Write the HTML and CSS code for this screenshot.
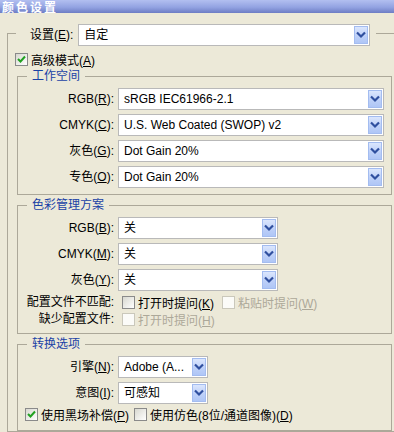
FILE: index.html
```html
<!DOCTYPE html>
<html lang="zh-CN">
<head>
    <meta charset="UTF-8">
    <meta name="viewport" content="width=device-width, initial-scale=1.0">
    <title>颜色设置</title>
    <link rel="stylesheet" href="styles.css">
</head>
<body>
    <!-- Title bar -->
    <div class="titlebar">颜色设置</div>

    <fieldset class="outer">
        <legend class="outer-legend">
            <span class="lbl-top">设置(<u>E</u>):</span>
            <div class="combo combo-top">
                <span class="combo-text">自定</span>
                <span class="drop"><svg width="12" height="16" viewBox="0 0 12 16"><polyline points="2,5.5 6,9.5 10,5.5" /></svg></span>
            </div>
        </legend>

        <div class="check check-adv">
            <span class="cb"><svg width="11" height="11" viewBox="0 0 11 11"><polyline points="2,5 4.5,7.5 9,2.5" /></svg></span>
            <span>高级模式(<u>A</u>)</span>
        </div>

        <!-- Working spaces -->
        <fieldset class="group group-work">
            <legend>工作空间</legend>
            <div class="form-grid">
                <span class="lbl">RGB(<u>R</u>):</span>
                <div class="combo combo-wide">
                    <span class="combo-text">sRGB IEC61966-2.1</span>
                    <span class="drop"><svg width="12" height="16" viewBox="0 0 12 16"><polyline points="2,5.5 6,9.5 10,5.5" /></svg></span>
                </div>
                <span class="lbl">CMYK(<u>C</u>):</span>
                <div class="combo combo-wide">
                    <span class="combo-text">U.S. Web Coated (SWOP) v2</span>
                    <span class="drop"><svg width="12" height="16" viewBox="0 0 12 16"><polyline points="2,5.5 6,9.5 10,5.5" /></svg></span>
                </div>
                <span class="lbl">灰色(<u>G</u>):</span>
                <div class="combo combo-wide">
                    <span class="combo-text">Dot Gain 20%</span>
                    <span class="drop"><svg width="12" height="16" viewBox="0 0 12 16"><polyline points="2,5.5 6,9.5 10,5.5" /></svg></span>
                </div>
                <span class="lbl">专色(<u>O</u>):</span>
                <div class="combo combo-wide">
                    <span class="combo-text">Dot Gain 20%</span>
                    <span class="drop"><svg width="12" height="16" viewBox="0 0 12 16"><polyline points="2,5.5 6,9.5 10,5.5" /></svg></span>
                </div>
            </div>
        </fieldset>

        <!-- Color management policies -->
        <fieldset class="group group-policy">
            <legend>色彩管理方案</legend>
            <div class="form-grid">
                <span class="lbl">RGB(<u>B</u>):</span>
                <div class="combo combo-mid">
                    <span class="combo-text">关</span>
                    <span class="drop"><svg width="12" height="16" viewBox="0 0 12 16"><polyline points="2,5.5 6,9.5 10,5.5" /></svg></span>
                </div>
                <span class="lbl">CMYK(<u>M</u>):</span>
                <div class="combo combo-mid">
                    <span class="combo-text">关</span>
                    <span class="drop"><svg width="12" height="16" viewBox="0 0 12 16"><polyline points="2,5.5 6,9.5 10,5.5" /></svg></span>
                </div>
                <span class="lbl">灰色(<u>Y</u>):</span>
                <div class="combo combo-mid">
                    <span class="combo-text">关</span>
                    <span class="drop"><svg width="12" height="16" viewBox="0 0 12 16"><polyline points="2,5.5 6,9.5 10,5.5" /></svg></span>
                </div>
            </div>
            <div class="form-grid check-grid">
                <span class="lbl">配置文件不匹配:</span>
                <div class="check-pair">
                    <div class="check">
                        <span class="cb"></span>
                        <span>打开时提问(<u>K</u>)</span>
                    </div>
                    <div class="check disabled">
                        <span class="cb"></span>
                        <span>粘贴时提问(<u>W</u>)</span>
                    </div>
                </div>
                <span class="lbl">缺少配置文件:</span>
                <div class="check-pair">
                    <div class="check disabled">
                        <span class="cb"></span>
                        <span>打开时提问(<u>H</u>)</span>
                    </div>
                </div>
            </div>
        </fieldset>

        <!-- Conversion options -->
        <fieldset class="group group-convert">
            <legend>转换选项</legend>
            <div class="form-grid">
                <span class="lbl">引擎(<u>N</u>):</span>
                <div class="combo combo-short">
                    <span class="combo-text">Adobe (A...</span>
                    <span class="drop"><svg width="12" height="16" viewBox="0 0 12 16"><polyline points="2,5.5 6,9.5 10,5.5" /></svg></span>
                </div>
                <span class="lbl">意图(<u>I</u>):</span>
                <div class="combo combo-short">
                    <span class="combo-text">可感知</span>
                    <span class="drop"><svg width="12" height="16" viewBox="0 0 12 16"><polyline points="2,5.5 6,9.5 10,5.5" /></svg></span>
                </div>
            </div>
            <div class="check-line">
                <div class="check">
                    <span class="cb"><svg width="11" height="11" viewBox="0 0 11 11"><polyline points="2,5 4.5,7.5 9,2.5" /></svg></span>
                    <span>使用黑场补偿(<u>P</u>)</span>
                </div>
                <div class="check">
                    <span class="cb"></span>
                    <span>使用仿色(8位/通道图像)(<u>D</u>)</span>
                </div>
            </div>
        </fieldset>
    </fieldset>
</body>
</html>
```

FILE: styles.css
```css
body {
    margin: 0;
    width: 394px;
    height: 432px;
    overflow: hidden;
    background-color: #ece9d8;
    font-family: "Liberation Sans", "Noto Sans CJK SC", sans-serif;
    font-size: 12px;
    color: #000000;
}

u {
    text-decoration: underline;
    text-underline-offset: 1px;
}

.titlebar {
    height: 13px;
    overflow: hidden;
    padding-left: 2px;
    background: linear-gradient(#b2bff0, #93a3e2 55%, #6d7dc4);
    color: #ffffff;
    font-family: "Noto Sans CJK SC", sans-serif;
    font-weight: bold;
    font-size: 12px;
    line-height: 13px;
    letter-spacing: 2px;
}

/* group boxes */
fieldset {
    min-width: 0;
    margin: 0;
    border: 1px solid #aca899;
}

legend {
    padding: 0;
}

.outer {
    box-sizing: border-box;
    width: 387px;
    margin: 11px 0 0 7px;
    padding: 0 0 0 9px;
    border-right: none;
}

.outer-legend {
    display: flex;
    align-items: flex-start;
    gap: 5px;
    height: 18px;
    margin-left: -1px;
    padding: 0 6px 0 14px;
}

.lbl-top {
    line-height: 22px;
    white-space: nowrap;
}

.group {
    box-sizing: border-box;
    width: 375px;
    padding: 4px 7px 6px 7px;
}

.group legend {
    margin-left: 2px;
    padding: 0 5px;
    line-height: 16px;
    color: #1a42a6;
}

.group-work {
    margin-top: 1px;
}

.group-policy {
    margin-top: 2px;
}

.group-convert {
    margin-top: 2px;
    padding-bottom: 8px;
}

/* label + control rows */
.form-grid {
    display: grid;
    grid-template-columns: 89px auto;
    column-gap: 4px;
    row-gap: 4px;
    align-items: center;
    justify-items: start;
}

.lbl {
    justify-self: end;
    white-space: nowrap;
    line-height: 16px;
}

.check-grid {
    margin-top: 3px;
    row-gap: 1px;
}

/* combo boxes */
.combo {
    box-sizing: border-box;
    display: flex;
    align-items: center;
    height: 22px;
    padding: 1px;
    border: 1px solid #b9b9b9;
    background-color: #ffffff;
}

.combo-top {
    width: 292px;
}

.combo-wide {
    width: 266px;
}

.combo-mid {
    width: 160px;
}

.combo-short {
    width: 90px;
}

.combo-text {
    flex: 1;
    padding-left: 4px;
    line-height: 18px;
    white-space: nowrap;
    overflow: hidden;
}

.drop {
    box-sizing: border-box;
    display: flex;
    width: 14px;
    height: 18px;
    border: 1px solid #a3bcf0;
    background: linear-gradient(#dbe6fd, #bccff8 60%, #afc6f6);
}

.drop polyline {
    fill: none;
    stroke: #2f4f9f;
    stroke-width: 2.2;
}

/* check boxes */
.check {
    display: flex;
    align-items: center;
    gap: 3px;
    height: 16px;
    white-space: nowrap;
}

.cb {
    box-sizing: border-box;
    display: flex;
    width: 13px;
    height: 13px;
    border: 1px solid #8a8a8a;
    background: linear-gradient(135deg, #d8d8d0, #ffffff);
}

.cb polyline {
    fill: none;
    stroke: #21a121;
    stroke-width: 2;
}

.check.disabled {
    color: #aca899;
}

.check.disabled .cb {
    border-color: #cac8bb;
    background: #fbfbf8;
}

.check-adv {
    margin: 9px 0 0 -2px;
}

.check-pair {
    display: flex;
    gap: 8px;
    margin-left: 4px;
}

.check-line {
    display: flex;
    gap: 5px;
    margin-top: 2px;
}
```
